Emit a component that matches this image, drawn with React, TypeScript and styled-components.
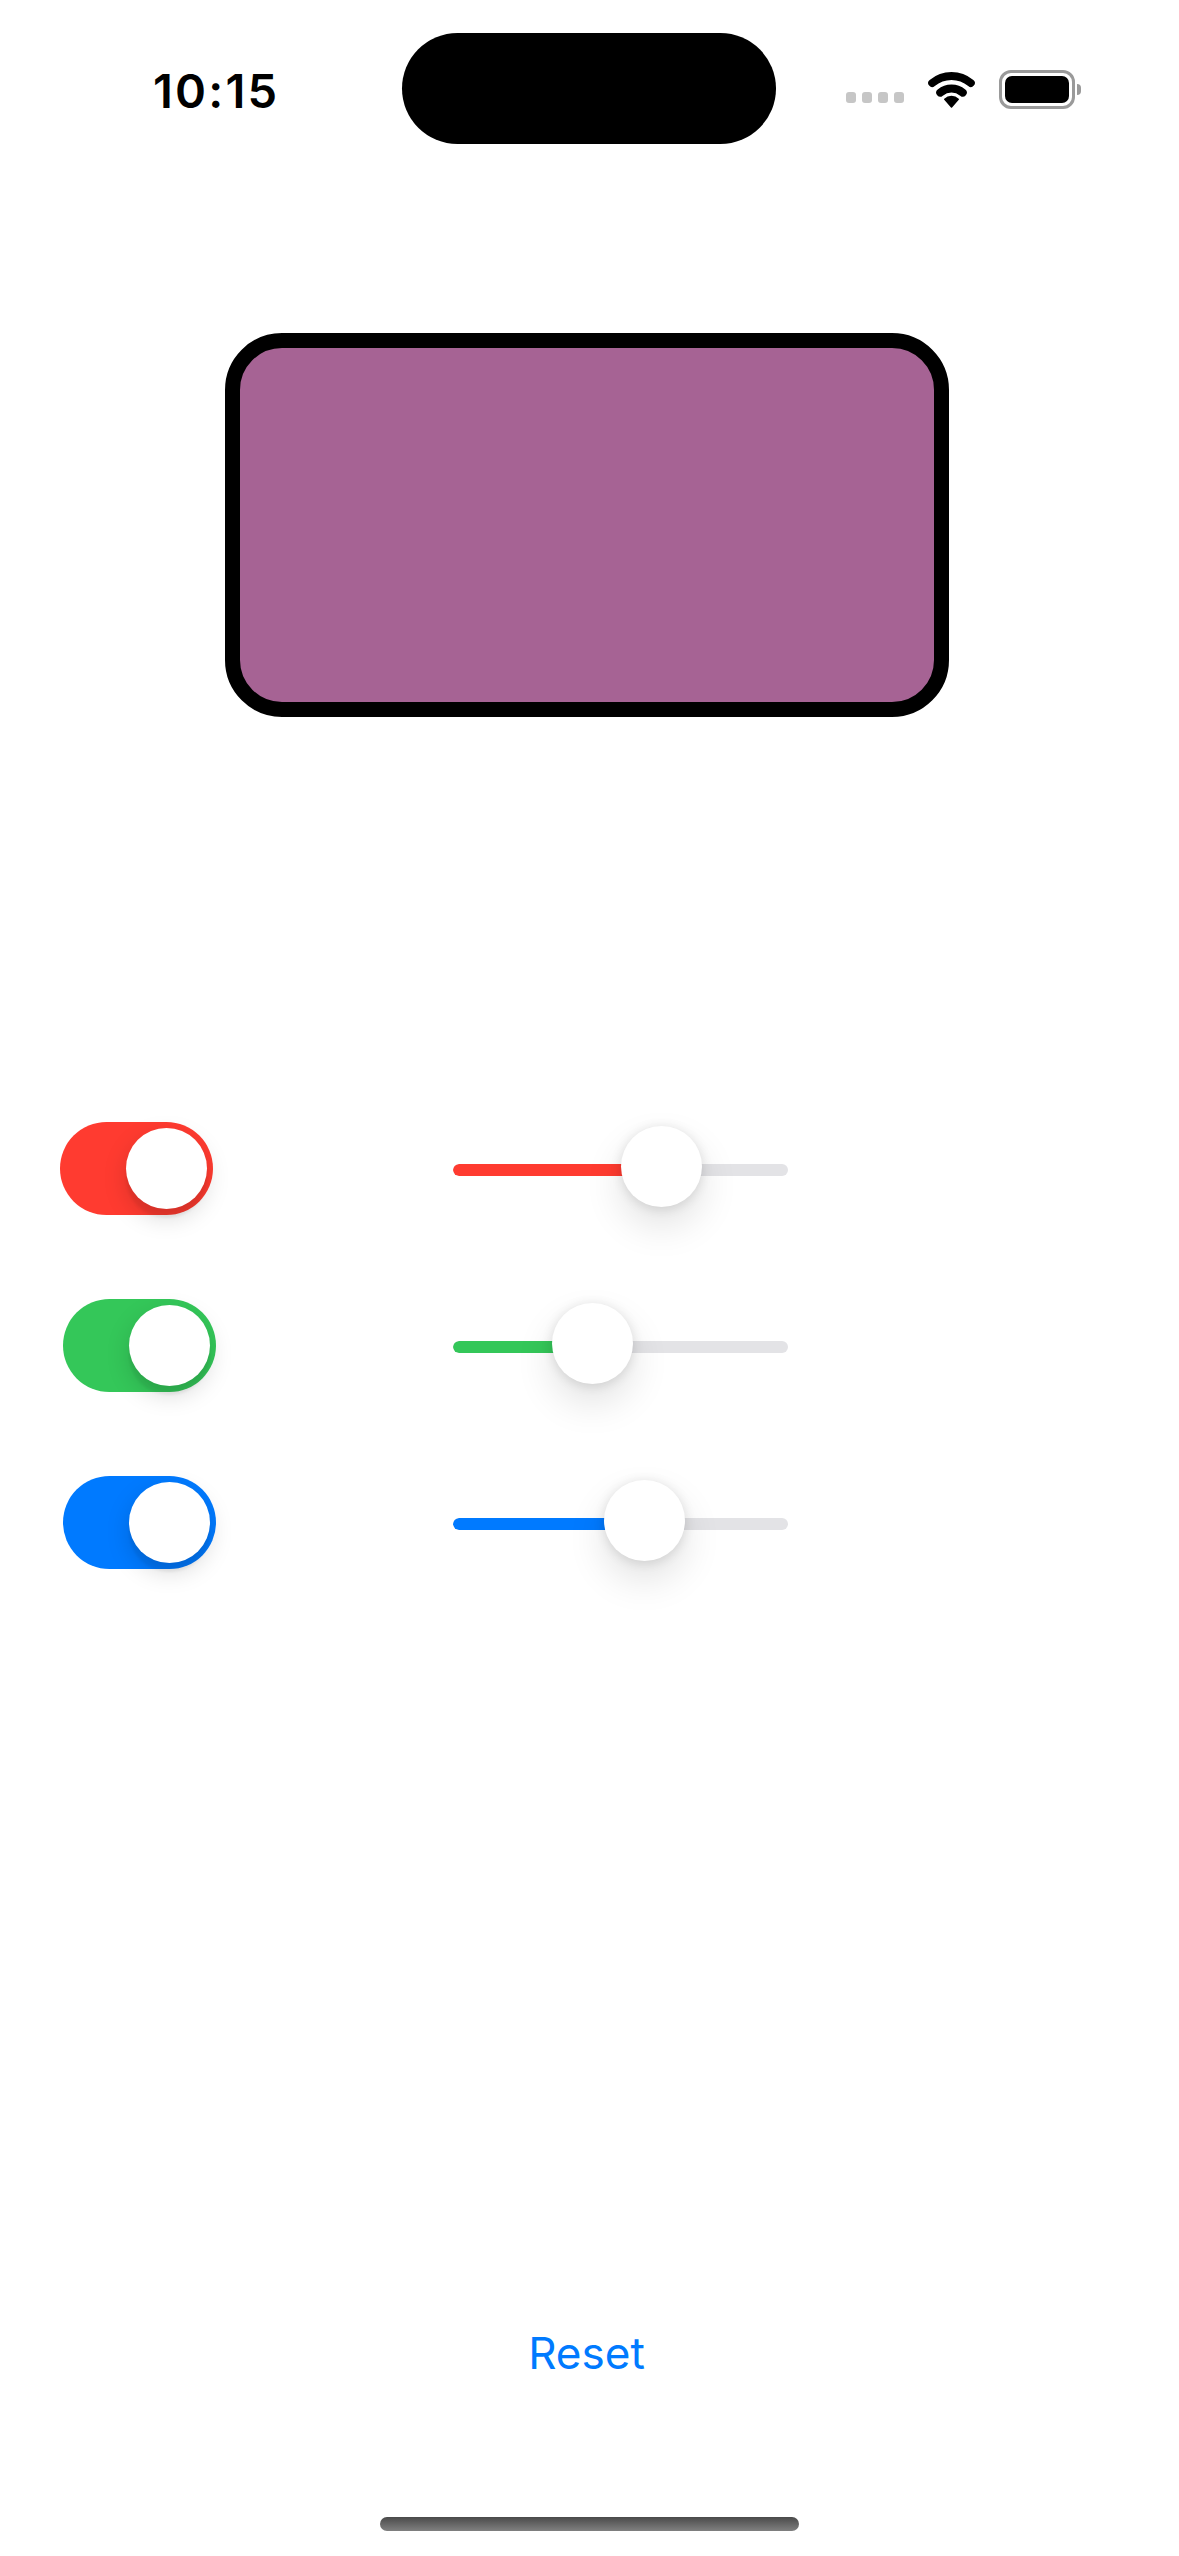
import React from "react";
import styled, { createGlobalStyle } from "styled-components";

const Global = createGlobalStyle`
  html, body { margin: 0; padding: 0; background: #ffffff; }
  body { width: 1179px; font-family: Inter, "Noto Sans", "Liberation Sans", sans-serif; }
  * { box-sizing: border-box; }
`;

const Screen = styled.div`
  width: 1179px;
  height: 2556px;
  background: #ffffff;
  display: flex;
  flex-direction: column;
  overflow: hidden;
`;

const StatusBar = styled.div`
  display: grid;
  grid-template-columns: 402px 374px 1fr;
  height: 144px;
  padding-top: 33px;
`;

const TimeCell = styled.div`
  display: flex;
  align-items: center;
  padding-left: 153px;
  padding-top: 3px;
`;

const Time = styled.span`
  font-family: Inter, "Liberation Sans", sans-serif;
  font-weight: 600;
  font-size: 47px;
  letter-spacing: 2.2px;
  color: #000000;
`;

const Island = styled.div`
  height: 111px;
  border-radius: 56px;
  background: #000000;
`;

const Indicators = styled.div`
  display: flex;
  align-items: center;
  padding-left: 70px;
  gap: 22px;
`;

const Dots = styled.div`
  display: flex;
  gap: 6px;
  align-self: center;
  margin-top: 18px;
`;

const Dot = styled.span`
  width: 10px;
  height: 11px;
  border-radius: 3px;
  background: #c6c6c6;
`;

const Battery = styled.div`
  display: flex;
  align-items: center;
  gap: 2px;
  margin-top: 1px;
`;

const BatteryBody = styled.div`
  width: 76px;
  height: 39px;
  border: 3.5px solid #9a9a9a;
  border-radius: 12px;
  padding: 3px;
`;

const BatteryFill = styled.div`
  width: 100%;
  height: 100%;
  border-radius: 7px;
  background: #000000;
`;

const BatteryCap = styled.div`
  width: 4px;
  height: 11px;
  border-radius: 0 4px 4px 0;
  background: #9a9a9a;
`;

const Preview = styled.div`
  margin-top: 189px;
  margin-left: 225px;
  width: 724px;
  height: 384px;
  border: 15px solid #000000;
  border-radius: 57px;
  background: #a66394;
`;

const Controls = styled.div`
  margin-top: 405px;
  display: flex;
  flex-direction: column;
  gap: 84px;
`;

const Row = styled.div`
  display: grid;
  grid-template-columns: 393px 335px;
  align-items: center;
  height: 93px;
  padding-left: 60px;
`;

const ToggleTrack = styled.div<{ $color: string; $shift: number }>`
  width: 153px;
  height: 93px;
  margin-left: ${(p) => p.$shift}px;
  border-radius: 47px;
  background: ${(p) => p.$color};
  padding: 6px;
  display: flex;
  justify-content: flex-end;
`;

const ToggleKnob = styled.div`
  width: 81px;
  height: 81px;
  border-radius: 50%;
  background: #ffffff;
  box-shadow: 0 9px 24px rgba(0, 0, 0, 0.15), 0 9px 3px rgba(0, 0, 0, 0.06);
`;

const SliderBox = styled.div`
  position: relative;
  width: 335px;
  height: 93px;
  display: flex;
  align-items: center;
  padding-top: 2px;
`;

const SliderTrack = styled.div`
  position: relative;
  width: 100%;
  height: 12px;
  border-radius: 6px;
  background: #e3e3e6;
  overflow: hidden;
`;

const SliderFill = styled.div<{ $color: string }>`
  height: 100%;
  border-radius: 6px 0 0 6px;
  background: ${(p) => p.$color};
`;

const SliderThumb = styled.div`
  position: absolute;
  top: 4px;
  width: 81px;
  height: 81px;
  margin-left: -40.5px;
  border-radius: 50%;
  background: #ffffff;
  box-shadow: 0 18px 39px rgba(0, 0, 0, 0.12), 0 1.5px 12px rgba(0, 0, 0, 0.12);
`;

const ResetButton = styled.button`
  margin-top: 758px;
  align-self: center;
  margin-left: -6px;
  border: none;
  background: transparent;
  padding: 0;
  font-family: Inter, "Liberation Sans", sans-serif;
  font-size: 44px;
  font-weight: 400;
  line-height: 52px;
  color: #007aff;
`;

const HomeIndicator = styled.div`
  margin-top: 138px;
  margin-left: 380px;
  width: 419px;
  height: 14px;
  border-radius: 7px;
  background: linear-gradient(180deg, #4a4a4a 0%, #808080 100%);
`;

const WifiIcon = () => {
  const cx = 25.5;
  const cy = 36;
  const arc = (r: number, a: number) => {
    const rad = (a * Math.PI) / 180;
    const x1 = cx - r * Math.sin(rad);
    const y1 = cy - r * Math.cos(rad);
    const x2 = cx + r * Math.sin(rad);
    return `M ${x1} ${y1} A ${r} ${r} 0 0 1 ${x2} ${y1}`;
  };
  const wedge = (r: number, a: number) => {
    const rad = (a * Math.PI) / 180;
    const x1 = cx - r * Math.sin(rad);
    const y1 = cy - r * Math.cos(rad);
    const x2 = cx + r * Math.sin(rad);
    return `M ${cx} ${cy + 1} L ${x1} ${y1} A ${r} ${r} 0 0 1 ${x2} ${y1} Z`;
  };
  return (
    <svg width="51" height="38" viewBox="0 0 51 38">
      <path d={arc(30, 40)} stroke="#000" strokeWidth="8" fill="none" strokeLinecap="round" />
      <path d={arc(17.5, 40)} stroke="#000" strokeWidth="8" fill="none" strokeLinecap="round" />
      <path d={wedge(9.5, 45)} fill="#000" strokeLinejoin="round" stroke="#000" strokeWidth="1.5" />
    </svg>
  );
};

type Ctl = { color: string; shift: number; thumb: number };

const controls: Ctl[] = [
  { color: "#ff3b30", shift: 0, thumb: 208.5 },
  { color: "#34c759", shift: 3, thumb: 139 },
  { color: "#007aff", shift: 3, thumb: 191 },
];

export default function App() {
  return (
    <>
      <Global />
      <Screen>
        <StatusBar>
          <TimeCell>
            <Time>10:15</Time>
          </TimeCell>
          <Island />
          <Indicators>
            <Dots>
              <Dot />
              <Dot />
              <Dot />
              <Dot />
            </Dots>
            <WifiIcon />
            <Battery>
              <BatteryBody>
                <BatteryFill />
              </BatteryBody>
              <BatteryCap />
            </Battery>
          </Indicators>
        </StatusBar>

        <Preview />

        <Controls>
          {controls.map((c, i) => (
            <Row key={i}>
              <ToggleTrack $color={c.color} $shift={c.shift}>
                <ToggleKnob />
              </ToggleTrack>
              <SliderBox>
                <SliderTrack>
                  <SliderFill $color={c.color} style={{ width: `${c.thumb}px` }} />
                </SliderTrack>
                <SliderThumb style={{ left: `${c.thumb}px` }} />
              </SliderBox>
            </Row>
          ))}
        </Controls>

        <ResetButton>Reset</ResetButton>
        <HomeIndicator />
      </Screen>
    </>
  );
}
